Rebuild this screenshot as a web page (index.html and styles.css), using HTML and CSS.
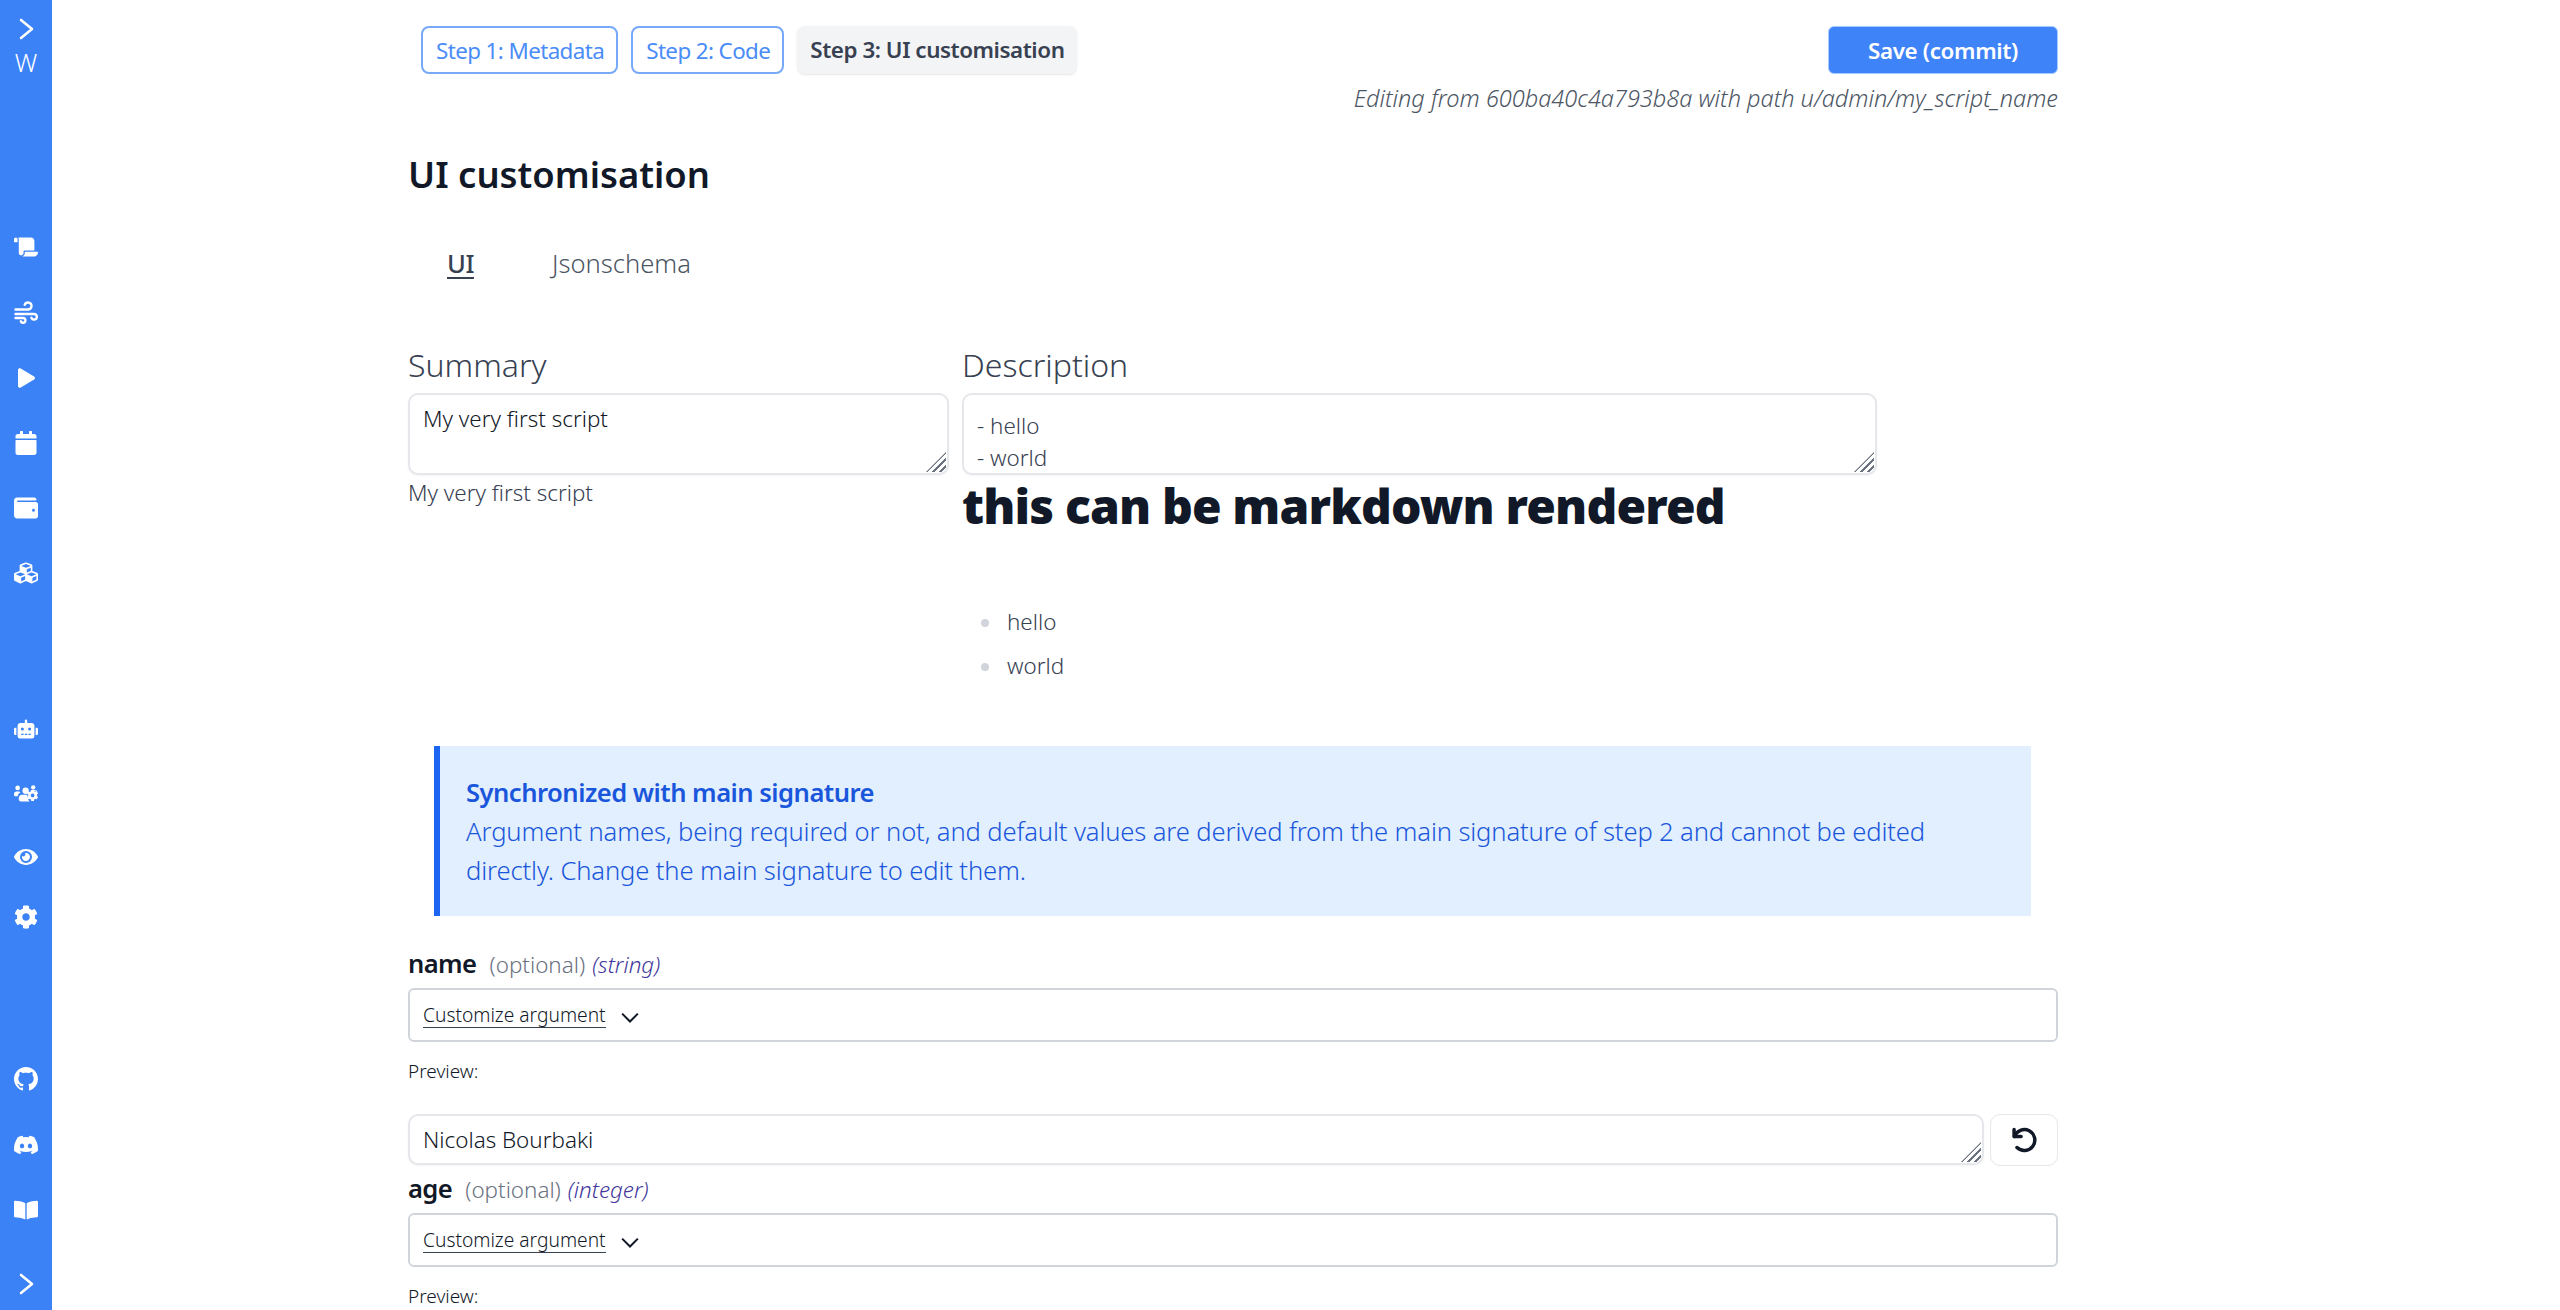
FILE: index.html
```html
<!DOCTYPE html>
<html lang="en">
<head>
  <meta charset="UTF-8">
  <title>UI customisation</title>
  <link rel="stylesheet" href="styles.css">
</head>
<body>
  <aside class="sidebar">
    <div class="side-top">
      <svg class="chev" viewBox="0 0 24 24"><path d="M7 3l11 9-11 9"/></svg>
      <span class="logo">W</span>
    </div>
    <nav class="side-group side-main">
      <!-- scroll -->
      <svg viewBox="0 0 640 512"><path d="M48 0C21.530 0 0 21.530 0 48v64c0 8.840 7.160 16 16 16h80V48C96 21.530 74.470 0 48 0zm208 412.570V352h288V96c0-52.940-43.060-96-96-96H111.590C121.740 13.410 128 29.920 128 48v368c0 38.870 34.650 69.650 74.770 63.120C234.270 474 256 444.460 256 412.570zM288 384v32c0 52.930-43.060 96-96 96h336c61.860 0 112-50.140 112-112 0-8.840-7.160-16-16-16H288z"/></svg>
      <!-- wind -->
      <svg viewBox="0 0 24 24"><path class="line" d="M1.500 9.500H14a3.500 3.500 0 1 0-3.300-4.700M1.500 14H20a2.800 2.800 0 1 1-2.600 3.800M1.500 18H9a2.400 2.400 0 1 1-2.200 3.300"/></svg>
      <!-- play -->
      <svg class="side-play" viewBox="0 0 448 512"><path d="M424.400 214.700L72.400 6.600C43.800-10.300 0 6.100 0 47.900V464c0 37.500 40.700 60.100 72.400 41.300l352-208c31.400-18.500 31.500-64.100 0-82.600z"/></svg>
      <!-- calendar -->
      <svg viewBox="0 0 448 512"><path d="M12 192h424c6.600 0 12 5.400 12 12v260c0 26.500-21.500 48-48 48H48c-26.500 0-48-21.500-48-48V204c0-6.600 5.400-12 12-12zm436-44v-36c0-26.500-21.500-48-48-48h-48V12c0-6.600-5.400-12-12-12h-40c-6.600 0-12 5.400-12 12v52H160V12c0-6.600-5.400-12-12-12h-40c-6.600 0-12 5.400-12 12v52H48C21.500 64 0 85.500 0 112v36c0 6.600 5.400 12 12 12h424c6.600 0 12-5.400 12-12z"/></svg>
      <!-- wallet -->
      <svg viewBox="0 0 512 512"><path d="M461.200 128H80c-8.840 0-16-7.160-16-16s7.160-16 16-16h384c8.840 0 16-7.160 16-16 0-26.510-21.490-48-48-48H64C28.650 32 0 60.650 0 96v320c0 35.350 28.650 64 64 64h397.200c28.020 0 50.800-21.530 50.800-48V176c0-26.470-22.780-48-50.800-48zM416 336c-17.670 0-32-14.330-32-32s14.330-32 32-32 32 14.330 32 32-14.330 32-32 32z"/></svg>
      <!-- cubes -->
      <svg viewBox="0 0 512 512"><path d="M488.600 250.200L392 214V105.500c0-15-9.300-28.400-23.400-33.700l-100-37.500c-8.100-3.100-17.100-3.100-25.300 0l-100 37.500c-14.100 5.300-23.400 18.700-23.400 33.700V214l-96.600 36.200C9.300 255.500 0 268.900 0 283.900V394c0 13.600 7.700 26.100 19.900 32.200l100 50c10.100 5.100 22.100 5.100 32.200 0l103.900-52 103.900 52c10.100 5.100 22.100 5.100 32.200 0l100-50c12.200-6.100 19.900-18.600 19.900-32.200V283.900c0-15-9.300-28.400-23.400-33.700zM358 214.800l-85 31.900v-68.200l85-37v73.300zM154 104.100l102-38.200 102 38.200v.6l-102 41.400-102-41.400v-.6zm84 291.100l-85 42.500v-79.100l85-38.800v75.400zm0-112l-102 41.400-102-41.400v-.6l102-38.200 102 38.200v.6zm240 112l-85 42.500v-79.100l85-38.800v75.400zm0-112l-102 41.400-102-41.400v-.6l102-38.200 102 38.200v.6z"/></svg>
    </nav>
    <nav class="side-group side-second">
      <!-- robot -->
      <svg viewBox="0 0 640 512"><path d="M32 224H64V416H32A32 32 0 0 1 0 384V256A32 32 0 0 1 32 224ZM544 176V448a64 64 0 0 1-64 64H160a64 64 0 0 1-64-64V176a80 80 0 0 1 80-80H288V32a32 32 0 0 1 64 0V96H464A80 80 0 0 1 544 176ZM264 256a40 40 0 1 0-40 40A40 40 0 0 0 264 256Zm-8 128H192v32h64Zm96 0H288v32h64ZM456 256a40 40 0 1 0-40 40A40 40 0 0 0 456 256Zm-8 128H384v32h64ZM640 256V384a32 32 0 0 1-32 32H576V224h32A32 32 0 0 1 640 256Z"/></svg>
      <!-- users cog -->
      <svg viewBox="0 0 640 512"><circle cx="96" cy="120" r="62"/><circle cx="512" cy="104" r="58"/><circle cx="310" cy="196" r="84"/><path d="M64 214h64c18 0 34 7 45 19-40 22-68 60-75 108H32a32 32 0 0 1-32-32v-31c0-35 29-64 64-64z"/><path d="M210 300h110c14 0 26 2 38 6-6 30 2 62 24 88-8 32 8 68 36 86H176c-26 0-48-21-48-48v-50c0-45 37-82 82-82z"/><path d="M452 178h92c40 0 72 20 88 56l-24-8c-14-14-30-20-48-20h-64z" /><path d="M610.500 341.300c2.600-14.100 2.600-28.500 0-42.600l25.800-14.900c3-1.700 4.300-5.200 3.300-8.500-6.700-21.600-18.200-41.200-33.200-57.400-2.300-2.500-6-3.100-9-1.400l-25.800 14.900c-10.900-9.300-23.400-16.500-36.900-21.300v-29.800c0-3.400-2.400-6.400-5.700-7.100-22.300-5-45-4.800-66.200 0-3.300.7-5.700 3.700-5.700 7.100v29.800c-13.500 4.800-26 12-36.900 21.300l-25.800-14.900c-2.900-1.700-6.700-1.100-9 1.400-15 16.200-26.500 35.800-33.200 57.400-1 3.300.4 6.800 3.300 8.500l25.800 14.900c-2.600 14.100-2.600 28.500 0 42.600l-25.800 14.900c-3 1.700-4.300 5.200-3.300 8.500 6.700 21.600 18.200 41.100 33.200 57.400 2.300 2.500 6 3.100 9 1.400l25.800-14.900c10.900 9.300 23.400 16.500 36.900 21.300v29.800c0 3.400 2.400 6.400 5.700 7.100 22.300 5 45 4.800 66.200 0 3.300-.7 5.700-3.700 5.700-7.100v-29.800c13.500-4.800 26-12 36.900-21.300l25.800 14.900c2.900 1.700 6.700 1.100 9-1.400 15-16.200 26.500-35.800 33.200-57.400 1-3.300-.4-6.800-3.300-8.500l-25.800-14.900zM496 368.500c-26.800 0-48.500-21.800-48.500-48.500s21.800-48.500 48.500-48.500 48.500 21.800 48.500 48.500-21.700 48.500-48.500 48.500z"/></svg>
      <!-- eye -->
      <svg viewBox="0 0 576 512"><path d="M572.520 241.400C518.290 135.590 410.930 64 288 64S57.680 135.640 3.480 241.410a32.350 32.350 0 0 0 0 29.190C57.710 376.410 165.070 448 288 448s230.320-71.640 284.520-177.410a32.350 32.350 0 0 0 0-29.190zM288 400a144 144 0 1 1 144-144 143.930 143.930 0 0 1-144 144zm0-240a95.310 95.310 0 0 0-25.310 3.790 47.850 47.850 0 0 1-66.900 66.900A95.780 95.780 0 1 0 288 160z"/></svg>
      <!-- cog -->
      <svg class="side-cog" viewBox="0 0 512 512"><path d="M487.400 315.700l-42.600-24.600c4.300-23.200 4.300-47 0-70.200l42.600-24.600c4.900-2.800 7.100-8.600 5.500-14-11.100-35.600-30-67.800-54.700-94.600-3.800-4.100-10-5.100-14.800-2.300L380.800 110c-17.900-15.400-38.500-27.300-60.800-35.100V25.800c0-5.600-3.900-10.500-9.400-11.700-36.700-8.200-74.300-7.800-109.200 0-5.500 1.200-9.400 6.100-9.400 11.700V75c-22.200 7.900-42.800 19.800-60.800 35.100L88.700 85.500c-4.900-2.800-11-1.900-14.800 2.300-24.700 26.700-43.600 58.900-54.700 94.600-1.700 5.400.6 11.200 5.500 14L67.300 221c-4.300 23.200-4.300 47 0 70.200l-42.600 24.600c-4.900 2.800-7.100 8.600-5.500 14 11.100 35.600 30 67.800 54.700 94.600 3.800 4.100 10 5.100 14.800 2.300l42.600-24.600c17.900 15.400 38.500 27.300 60.800 35.100v49.200c0 5.600 3.900 10.500 9.400 11.700 36.700 8.200 74.300 7.800 109.200 0 5.500-1.200 9.400-6.100 9.400-11.700v-49.200c22.200-7.900 42.800-19.800 60.800-35.100l42.600 24.600c4.900 2.800 11 1.900 14.800-2.300 24.700-26.700 43.600-58.900 54.700-94.600 1.500-5.500-.7-11.300-5.600-14.100zM256 336c-44.100 0-80-35.900-80-80s35.900-80 80-80 80 35.900 80 80-35.900 80-80 80z"/></svg>
    </nav>
    <nav class="side-group side-bottom">
      <!-- github -->
      <svg viewBox="0 0 16 16"><path d="M8 0C3.580 0 0 3.580 0 8c0 3.540 2.290 6.530 5.470 7.590.4.070.55-.17.55-.38 0-.19-.01-.82-.01-1.490-2.010.37-2.530-.49-2.690-.94-.09-.23-.48-.94-.82-1.130-.28-.15-.68-.52-.01-.53.63-.01 1.080.58 1.230.82.72 1.210 1.870.87 2.330.66.070-.52.28-.87.510-1.070-1.780-.2-3.640-.89-3.640-3.950 0-.87.31-1.590.82-2.150-.08-.2-.36-1.020.08-2.120 0 0 .67-.21 2.200.82.64-.18 1.320-.27 2-.27.68 0 1.360.09 2 .27 1.530-1.040 2.200-.82 2.200-.82.44 1.100.16 1.920.08 2.120.51.56.82 1.270.82 2.150 0 3.070-1.870 3.750-3.650 3.950.29.25.54.73.54 1.480 0 1.070-.01 1.930-.01 2.200 0 .21.15.46.55.38A8.013 8.013 0 0 0 16 8c0-4.420-3.580-8-8-8z"/></svg>
      <!-- discord -->
      <svg viewBox="0 0 24 24"><path d="M20.317 4.370a19.791 19.791 0 0 0-4.885-1.515.074.074 0 0 0-.079.037c-.21.375-.444.864-.608 1.250a18.270 18.270 0 0 0-5.487 0 12.640 12.640 0 0 0-.617-1.250.077.077 0 0 0-.079-.037A19.736 19.736 0 0 0 3.677 4.370a.07.07 0 0 0-.032.027C.533 9.046-.32 13.580.099 18.057a.082.082 0 0 0 .031.057 19.900 19.900 0 0 0 5.993 3.030.078.078 0 0 0 .084-.028c.462-.63.874-1.295 1.226-1.994a.076.076 0 0 0-.041-.106 13.107 13.107 0 0 1-1.872-.892.077.077 0 0 1-.008-.128 10.200 10.200 0 0 0 .372-.292.074.074 0 0 1 .077-.01c3.928 1.793 8.180 1.793 12.062 0a.074.074 0 0 1 .078.01c.12.098.246.198.373.292a.077.077 0 0 1-.006.127 12.299 12.299 0 0 1-1.873.892.077.077 0 0 0-.041.107c.36.698.772 1.362 1.225 1.993a.076.076 0 0 0 .084.028 19.839 19.839 0 0 0 6.002-3.030.077.077 0 0 0 .032-.054c.5-5.177-.838-9.674-3.549-13.660a.061.061 0 0 0-.031-.03zM8.020 15.330c-1.183 0-2.157-1.085-2.157-2.419 0-1.333.956-2.419 2.157-2.419 1.210 0 2.176 1.096 2.157 2.420 0 1.333-.956 2.418-2.157 2.418zm7.975 0c-1.183 0-2.157-1.085-2.157-2.419 0-1.333.955-2.419 2.157-2.419 1.210 0 2.176 1.096 2.157 2.420 0 1.333-.946 2.418-2.157 2.418z"/></svg>
      <!-- book -->
      <svg viewBox="0 0 576 512"><path d="M542.220 32.050c-54.800 3.110-163.720 14.430-230.960 55.590-4.640 2.840-7.270 7.890-7.270 13.170v363.870c0 11.550 12.630 18.850 23.280 13.490 69.180-34.820 169.230-44.320 218.700-46.920 16.890-.89 30.020-14.430 30.020-30.660V62.750c.01-17.710-15.350-31.740-33.770-30.700zM264.730 87.640C197.500 46.480 88.580 35.170 33.780 32.050 15.360 31.010 0 45.040 0 62.750V400.600c0 16.240 13.130 29.780 30.020 30.660 49.490 2.600 149.590 12.110 218.770 46.950 10.620 5.350 23.210-1.940 23.210-13.460V100.630c0-5.290-2.620-10.140-7.270-12.990z"/></svg>
      <svg class="chev" viewBox="0 0 24 24"><path d="M7 3l11 9-11 9"/></svg>
    </nav>
  </aside>

  <main class="main">
    <div class="top-row">
      <div class="steps">
        <a class="step step-link">Step 1: Metadata</a>
        <a class="step step-link">Step 2: Code</a>
        <a class="step step-active">Step 3: UI customisation</a>
      </div>
      <div class="top-right">
        <button class="save-btn">Save (commit)</button>
        <div class="edit-note">Editing from 600ba40c4a793b8a with path u/admin/my_script_name</div>
      </div>
    </div>

    <h2 class="page-title">UI customisation</h2>

    <div class="tabs">
      <span class="tab tab-active">UI</span>
      <span class="tab">Jsonschema</span>
    </div>

    <div class="meta-row">
      <div class="meta-summary">
        <div class="meta-label">Summary</div>
        <div class="fake-area summary-area">My very first script<i class="grip"></i></div>
        <div class="summary-text">My very first script</div>
      </div>
      <div class="meta-desc">
        <div class="meta-label">Description</div>
        <div class="fake-area desc-area">- hello<br>- world<i class="grip"></i></div>
        <h1 class="md-title">this can be markdown rendered</h1>
        <ul class="md-list">
          <li>hello</li>
          <li>world</li>
        </ul>
      </div>
    </div>

    <div class="alert">
      <div class="alert-title">Synchronized with main signature</div>
      <div>Argument names, being required or not, and default values are derived from the main signature of step 2 and cannot be edited directly. Change the main signature to edit them.</div>
    </div>

    <section class="arg">
      <div class="arg-head"><b class="arg-name">name</b><span class="arg-opt">(optional)</span><em class="arg-type">(string)</em></div>
      <div class="customize"><span class="customize-link">Customize argument</span><svg class="down" viewBox="0 0 16 16"><path d="M1 5l7 7 7-7"/></svg></div>
      <div class="preview-label">Preview:</div>
      <div class="preview-row">
        <div class="fake-area value-area">Nicolas Bourbaki<i class="grip"></i></div>
        <button class="reset-btn"><svg viewBox="0 0 24 24"><path d="M3.500 3v6h6"/><path d="M3.800 9A9 9 0 1 1 6 18.500"/></svg></button>
      </div>
    </section>

    <section class="arg">
      <div class="arg-head arg-head-tight"><b class="arg-name">age</b><span class="arg-opt">(optional)</span><em class="arg-type">(integer)</em></div>
      <div class="customize"><span class="customize-link">Customize argument</span><svg class="down" viewBox="0 0 16 16"><path d="M1 5l7 7 7-7"/></svg></div>
      <div class="preview-label">Preview:</div>
    </section>
  </main>
</body>
</html>
```

FILE: styles.css
```css
* {
  box-sizing: border-box;
}

html, body {
  margin: 0;
  height: 100%;
  overflow: hidden;
}

body {
  display: flex;
  background-color: #fff;
  color: #111827;
  font-family: "Noto Sans", sans-serif;
}

/* sidebar */
.sidebar {
  width: 52px;
  height: 1310px;
  flex-shrink: 0;
  background-color: #3b82f6;
  display: flex;
  flex-direction: column;
  align-items: center;
  color: #fff;
}

.sidebar svg {
  width: 24px;
  height: 24px;
  fill: #fff;
  display: block;
}

.sidebar svg .line {
  fill: none;
  stroke: #fff;
  stroke-width: 2.400;
  stroke-linecap: round;
}

.sidebar svg.chev path {
  fill: none;
  stroke: #fff;
  stroke-width: 2.600;
  stroke-linecap: round;
  stroke-linejoin: round;
}

.sidebar svg.side-play {
  width: 17px;
}

.side-top {
  height: 235px;
  padding-top: 17px;
  display: flex;
  flex-direction: column;
  align-items: center;
  gap: 7px;
}

.logo {
  font-size: 25px;
  line-height: 28px;
  font-weight: 300;
}

.side-group {
  display: flex;
  flex-direction: column;
  align-items: center;
}

.side-main {
  gap: 41.300px;
  height: 371px;
}

.side-second {
  margin-top: 111px;
  gap: 40px;
}

.sidebar svg.side-cog {
  margin-top: -4px;
}

.side-bottom {
  margin-top: 138px;
  gap: 41.500px;
}

.side-bottom .chev {
  margin-top: 8px;
}

/* main column */
.main {
  margin-left: 356px;
  width: 1650px;
  flex-shrink: 0;
}

.top-row {
  display: flex;
  justify-content: space-between;
  padding-top: 26px;
  height: 144px;
}

.steps {
  display: flex;
  gap: 13px;
  padding-left: 13px;
  align-items: flex-start;
}

.step {
  height: 48px;
  line-height: 46px;
  padding: 0 12px 0 13px;
  font-size: 22.400px;
  letter-spacing: -.6px;
  border-radius: 8px;
}

.step-link {
  border: 2px solid #76a9fa;
  color: #4a8cf8;
}

.step-active {
  background-color: #f3f4f6;
  color: #374151;
  font-weight: 600;
  line-height: 48px;
  padding: 0 13px;
  letter-spacing: -.45px;
  box-shadow: 0 1px 2px rgba(0, 0, 0, .1);
}

.top-right {
  display: flex;
  flex-direction: column;
  align-items: flex-end;
}

.save-btn {
  width: 230px;
  height: 48px;
  background-color: #3f83f8;
  border: 1px solid #a4cafe;
  border-radius: 6px;
  color: #fff;
  font-family: inherit;
  font-weight: 600;
  font-size: 22.400px;
  letter-spacing: -.35px;
}

.edit-note {
  margin-top: 9px;
  font-size: 23.500px;
  line-height: 30px;
  font-style: italic;
  font-weight: 300;
  color: #4b5563;
}

.page-title {
  margin: 0;
  font-size: 36.400px;
  line-height: 60px;
  font-weight: 600;
}

.tabs {
  display: flex;
  margin-top: 40px;
  padding-left: 39px;
  gap: 78px;
}

.tab {
  font-size: 25.600px;
  line-height: 40px;
  font-weight: 300;
  color: #4b5563;
}

.tab-active {
  color: #374151;
  font-weight: 500;
  letter-spacing: -.5px;
  text-decoration: underline;
  text-underline-offset: 4px;
}

.meta-row {
  display: flex;
  gap: 13px;
  margin-top: 59px;
  height: 403px;
}

.meta-summary {
  width: 541px;
}

.meta-desc {
  width: 915px;
}

.meta-label {
  font-size: 32px;
  line-height: 44px;
  font-weight: 300;
  color: #374151;
}

.fake-area {
  position: relative;
  border: 2px solid #e5e7eb;
  border-radius: 10px;
  height: 82px;
  overflow: hidden;
  font-size: 22.400px;
  font-weight: 300;
  line-height: 32px;
  background-color: #fff;
  box-shadow: 0 1px 2px rgba(0, 0, 0, .05);
}

.summary-area {
  margin-top: 6px;
  padding: 8px 13px;
  color: #111827;
}

.desc-area {
  margin-top: 6px;
  padding: 15px 13px;
  color: #374151;
}

.grip {
  position: absolute;
  right: 1px;
  bottom: 1px;
  width: 20px;
  height: 20px;
  background: repeating-linear-gradient(135deg, #fff 0 3px, #6b7280 3px 5px);
  clip-path: polygon(100% 0, 100% 100%, 0 100%);
}

.summary-text {
  margin-top: 2px;
  font-size: 22.400px;
  line-height: 32px;
  font-weight: 300;
  color: #374151;
}

.md-title {
  margin: 2px 0 0;
  font-size: 48px;
  line-height: 58px;
  font-weight: 900;
  letter-spacing: -.85px;
  color: #111827;
}

.md-list {
  list-style: none;
  margin: 65px 0 0;
  padding: 0 0 0 45px;
  font-size: 22.400px;
  line-height: 44px;
  font-weight: 300;
  color: #374151;
}

.md-list li {
  position: relative;
}

.md-list li::before {
  content: "";
  position: absolute;
  left: -26px;
  top: 19px;
  width: 8px;
  height: 8px;
  border-radius: 50%;
  background-color: #d1d5db;
}

.alert {
  margin: 0 27px 0 26px;
  height: 170px;
  padding: 27px 26px;
  background-color: #e1effe;
  border-left: 6px solid #1c64f2;
  color: #1a56db;
  font-size: 25.600px;
  line-height: 39px;
  font-weight: 300;
  letter-spacing: -.13px;
}

.alert-title {
  font-weight: 600;
  letter-spacing: -.52px;
}

.arg-head {
  margin-top: 31px;
  display: flex;
  align-items: baseline;
  height: 41px;
  font-size: 22.400px;
  line-height: 34px;
}

.arg-head-tight {
  margin-top: 6px;
  height: 41px;
}

.arg-name {
  font-size: 25.600px;
  font-weight: 600;
  letter-spacing: -.6px;
  margin-right: 13px;
}

.arg-opt {
  font-weight: 300;
  color: #6b7280;
  margin-right: 7px;
}

.arg-type {
  font-weight: 300;
  color: #42389d;
}

.customize {
  display: flex;
  align-items: center;
  height: 54px;
  border: 2px solid #d1d5db;
  border-radius: 6px;
  padding: 0 13px;
  font-size: 19.200px;
  font-weight: 300;
}

.customize-link {
  border-bottom: 1px solid #374151;
  line-height: 24px;
  white-space: pre;
}

.down {
  width: 18px;
  height: 18px;
  margin-left: 15px;
  margin-top: 4px;
}

.down path {
  fill: none;
  stroke: #111827;
  stroke-width: 1.800;
}

.preview-label {
  margin-top: 17px;
  font-size: 19px;
  line-height: 24px;
  font-weight: 300;
}

.preview-row {
  display: flex;
  gap: 6px;
  margin-top: 31px;
}

.value-area {
  width: 1576px;
  height: 51px;
  padding: 8px 13px;
  color: #111827;
}

.reset-btn {
  width: 68px;
  height: 52px;
  border: 1px solid #e5e7eb;
  border-radius: 10px;
  background-color: #fff;
  padding: 0;
  display: flex;
  align-items: center;
  justify-content: center;
}

.reset-btn svg {
  width: 28px;
  height: 28px;
}

.reset-btn path {
  fill: none;
  stroke: #111827;
  stroke-width: 3;
  stroke-linecap: round;
  stroke-linejoin: round;
}
```
